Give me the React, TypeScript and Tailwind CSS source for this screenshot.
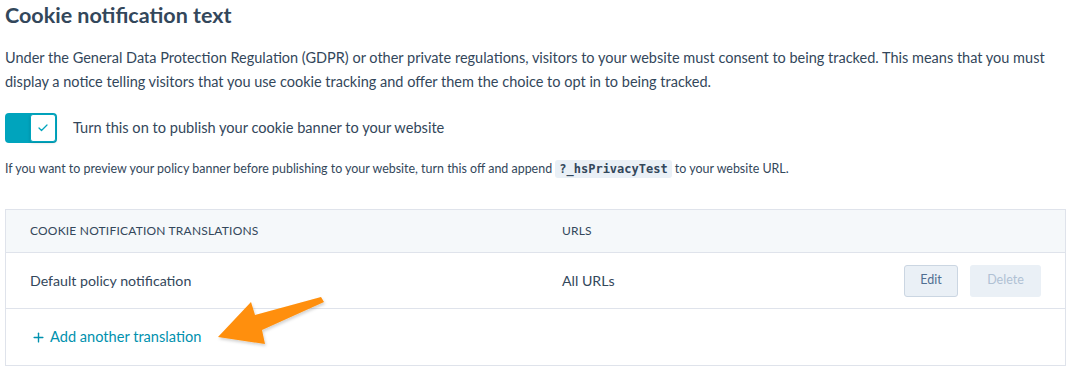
import { Check, Plus } from 'lucide-react';

const font = { fontFamily: 'Lato, "Open Sans", sans-serif' };

export default function App() {
  return (
    <div className="relative w-[1076px] h-[385px] bg-white text-[#33475b] px-[5px]" style={font}>
      {/* 見出し */}
      <h1 className="text-[21.5px] font-bold leading-[30px]">Cookie notification text</h1>

      <p className="mt-[16px] text-[14.5px] leading-[24px]">
        Under the General Data Protection Regulation (GDPR) or other private regulations, visitors to your website must consent to being tracked. This means that you must display a notice telling visitors that you use cookie tracking and offer them the choice to opt in to being tracked.
      </p>

      {/* トグル */}
      <div className="mt-[19px] flex items-center gap-[16px]">
        <div className="flex w-[52px] h-[30px] rounded-[4px] bg-[#00a4bd] p-[1px] justify-end">
          <div className="w-[26px] h-[28px] bg-white rounded-[3px] border border-[#00a4bd] flex items-center justify-center shadow-[0_1px_3px_rgba(0,0,0,0.15)]">
            <Check className="w-[12px] h-[12px] text-[#00a4bd]" strokeWidth={2.5} />
          </div>
        </div>
        <span className="text-[14.6px]">Turn this on to publish your cookie banner to your website</span>
      </div>

      <p className="mt-[15px] text-[12.45px] leading-[22px]">
        If you want to preview your policy banner before publishing to your website, turn this off and append{' '}
        <code className="bg-[#eaf0f6] rounded-[3px] px-[4px] py-[2px] text-[12px] font-bold" style={{ fontFamily: '"DejaVu Sans Mono", monospace' }}>?_hsPrivacyTest</code>{' '}
        to your website URL.
      </p>

      {/* テーブル */}
      <div className="mt-[29px] w-[1061px] border border-[#dfe3eb]">
        <div className="flex items-center h-[43px] bg-[#f5f8fa] border-b border-[#dfe3eb] text-[12px] tracking-[0.2px]">
          <div className="w-[556px] pl-[24px]">COOKIE NOTIFICATION TRANSLATIONS</div>
          <div>URLS</div>
        </div>
        <div className="flex items-center h-[56px] border-b border-[#dfe3eb] text-[14.2px]">
          <div className="w-[556px] pl-[24px]">Default policy notification</div>
          <div className="flex-1">All URLs</div>
          <div className="flex gap-[12px] pr-[24px]">
            <button className="h-[32px] w-[54px] rounded-[3px] border border-[#cbd6e2] bg-[#eaf0f6] text-[#506e91] text-[12.5px]">Edit</button>
            <button className="h-[32px] w-[71px] rounded-[3px] bg-[#eaf0f6] text-[#b0c1d4] text-[12.5px]">Delete</button>
          </div>
        </div>
        <div className="flex items-center h-[56px] pl-[25px] text-[14.6px] text-[#0091ae] gap-[4px]">
          <Plus className="w-[15px] h-[15px]" strokeWidth={2.2} />
          <span>Add another translation</span>
        </div>
      </div>

      {/* 矢印 */}
      <svg className="absolute left-0 top-0 pointer-events-none" width="1076" height="385">
        <defs>
          <filter id="sh" x="-20%" y="-20%" width="140%" height="140%">
            <feDropShadow dx="1" dy="2" stdDeviation="1.5" floodColor="#000" floodOpacity="0.18" />
          </filter>
        </defs>
        <polygon
          points="218,337 251,302 255,315 321,297 324,302 262,330 265,344"
          fill="#ff8f0a"
          filter="url(#sh)"
        />
      </svg>
    </div>
  );
}
